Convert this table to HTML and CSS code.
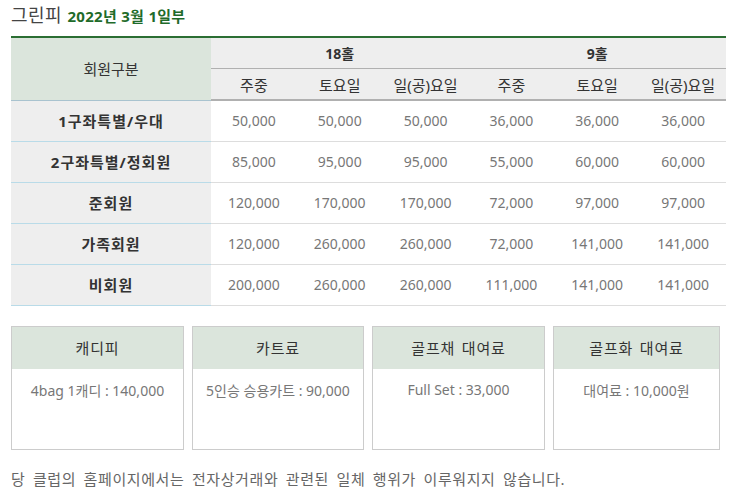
FILE: index.html
```html
<!DOCTYPE html>
<html>
<head>
    <meta charset="utf-8">
    <title>그린피</title>
    <link rel="stylesheet" href="styles.css">
</head>
<body>
    <div class="fee-page">
        <h2 class="fee-title">그린피 <span class="fee-date">2022년 3월 1일부</span></h2>

        <table class="fee-table">
            <thead>
                <tr>
                    <th class="col-head" rowspan="2">회원구분</th>
                    <th class="group-head" colspan="3">18홀</th>
                    <th class="group-head" colspan="3">9홀</th>
                </tr>
                <tr class="sub-head">
                    <th>주중</th>
                    <th>토요일</th>
                    <th>일(공)요일</th>
                    <th>주중</th>
                    <th>토요일</th>
                    <th>일(공)요일</th>
                </tr>
            </thead>
            <tbody>
                <tr>
                    <th>1구좌특별/우대</th>
                    <td>50,000</td><td>50,000</td><td>50,000</td>
                    <td>36,000</td><td>36,000</td><td>36,000</td>
                </tr>
                <tr>
                    <th>2구좌특별/정회원</th>
                    <td>85,000</td><td>95,000</td><td>95,000</td>
                    <td>55,000</td><td>60,000</td><td>60,000</td>
                </tr>
                <tr>
                    <th>준회원</th>
                    <td>120,000</td><td>170,000</td><td>170,000</td>
                    <td>72,000</td><td>97,000</td><td>97,000</td>
                </tr>
                <tr>
                    <th>가족회원</th>
                    <td>120,000</td><td>260,000</td><td>260,000</td>
                    <td>72,000</td><td>141,000</td><td>141,000</td>
                </tr>
                <tr>
                    <th>비회원</th>
                    <td>200,000</td><td>260,000</td><td>260,000</td>
                    <td>111,000</td><td>141,000</td><td>141,000</td>
                </tr>
            </tbody>
        </table>

        <div class="extra-fees">
            <div class="fee-box">
                <div class="fee-box-head">캐디피</div>
                <div class="fee-box-body">4bag 1캐디 : 140,000</div>
            </div>
            <div class="fee-box">
                <div class="fee-box-head">카트료</div>
                <div class="fee-box-body">5인승 승용카트 : 90,000</div>
            </div>
            <div class="fee-box">
                <div class="fee-box-head">골프채 대여료</div>
                <div class="fee-box-body">Full Set : 33,000</div>
            </div>
            <div class="fee-box">
                <div class="fee-box-head">골프화 대여료</div>
                <div class="fee-box-body">대여료 : 10,000원</div>
            </div>
        </div>

        <p class="fee-note">당 클럽의 홈페이지에서는 전자상거래와 관련된 일체 행위가 이루워지지 않습니다.</p>
    </div>
</body>
</html>
```

FILE: styles.css
```css
body {
    margin: 0;
    background: #fff;
    font-family: "Noto Sans", "Noto Sans CJK KR", sans-serif;
    color: #333;
}

.fee-page {
    padding: 4px 4px 0 11px;
}

.fee-title {
    margin: 0 0 9px 0;
    font-size: 18px;
    font-weight: normal;
    letter-spacing: 0.5px;
    color: #444;
    line-height: 22px;
}

.fee-date {
    font-size: 15px;
    font-weight: bold;
    letter-spacing: 0.3px;
    color: #1f6b2a;
}

.fee-table {
    width: 715px;
    border-collapse: collapse;
    border-top: 2px solid #2b6e33;
    font-size: 14px;
    table-layout: fixed;
}

.fee-table th,
.fee-table td {
    text-align: center;
    padding: 0;
}

.fee-table thead th {
    background: #eeeeee;
    color: #333;
    height: 30px;
}

.fee-table .col-head {
    width: 200px;
    background: #dbe5dc;
    font-size: 15px;
    font-weight: normal;
    border-bottom: 1px solid #a9c3cf;
}

.fee-table .group-head {
    font-weight: bold;
    border-bottom: 1px solid #b0b0b0;
}

.sub-head th {
    font-weight: normal;
    font-size: 15px;
    border-bottom: 2px solid #b0b0b0;
}

.fee-table tbody th {
    background: #eeeeee;
    font-size: 15px;
    font-weight: bold;
    letter-spacing: 1px;
    color: #333;
    height: 40px;
    border-bottom: 1px solid #b9dbe8;
}

.fee-table tbody td {
    color: #777;
    border-bottom: 1px solid #dddddd;
}

.extra-fees {
    display: grid;
    grid-template-columns: 173px 172px 173px 167px;
    gap: 8px;
    margin-top: 20px;
}

.fee-box {
    border: 1px solid #cccccc;
    height: 122px;
}

.fee-box-head {
    background: #dbe5dc;
    height: 42px;
    line-height: 42px;
    text-align: center;
    font-size: 15px;
    letter-spacing: 0.8px;
    word-spacing: 2px;
    color: #333;
}

.fee-box-body {
    padding-top: 11px;
    text-align: center;
    font-size: 14px;
    color: #777;
}

.fee-note {
    margin: 18px 0 0 0;
    font-size: 15px;
    letter-spacing: 0.6px;
    word-spacing: 3px;
    color: #666;
}
```
